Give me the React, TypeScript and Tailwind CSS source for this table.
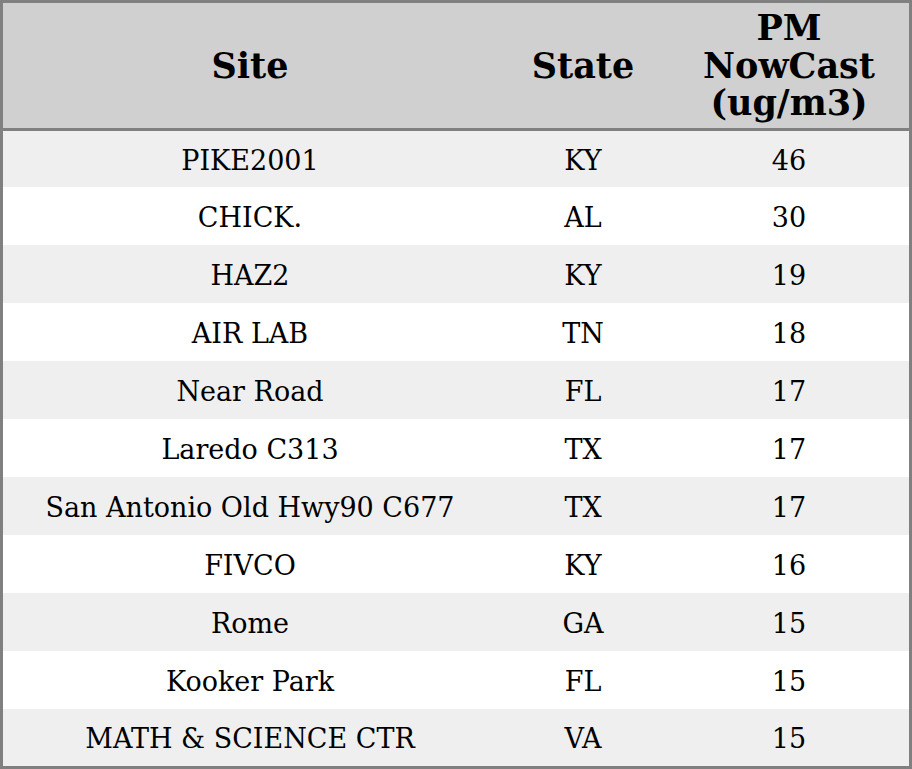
const rows: [string, string, number][] = [
  ["PIKE2001", "KY", 46],
  ["CHICK.", "AL", 30],
  ["HAZ2", "KY", 19],
  ["AIR LAB", "TN", 18],
  ["Near Road", "FL", 17],
  ["Laredo C313", "TX", 17],
  ["San Antonio Old Hwy90 C677", "TX", 17],
  ["FIVCO", "KY", 16],
  ["Rome", "GA", 15],
  ["Kooker Park", "FL", 15],
  ["MATH & SCIENCE CTR", "VA", 15],
]

export default function App() {
  return (
    <div className="w-[912px] h-[769px] bg-white font-['DejaVu_Serif',serif] text-black">
      <div className="border-[3px] border-[#808080]">
        <div className="grid grid-cols-[494px_172px_240px] h-[128px] items-center bg-[#d0d0d0] border-b-[3px] border-[#808080] text-[35px] font-bold leading-[37.5px] text-center">
          <div>Site</div>
          <div>State</div>
          <div>
            PM
            <br />
            NowCast
            <br />
            (ug/m3)
          </div>
        </div>
        {rows.map(([site, state, value], i) => (
          <div
            key={site}
            className={
              "grid grid-cols-[494px_172px_240px] items-center pt-1 text-center text-[27px] " +
              (i % 2 === 0 ? "bg-[#efefef] " : "bg-white ") +
              (i === 0 ? "h-[56px]" : i === rows.length - 1 ? "h-[57px]" : "h-[58px]")
            }
          >
            <div>{site}</div>
            <div>{state}</div>
            <div>{value}</div>
          </div>
        ))}
      </div>
    </div>
  )
}
